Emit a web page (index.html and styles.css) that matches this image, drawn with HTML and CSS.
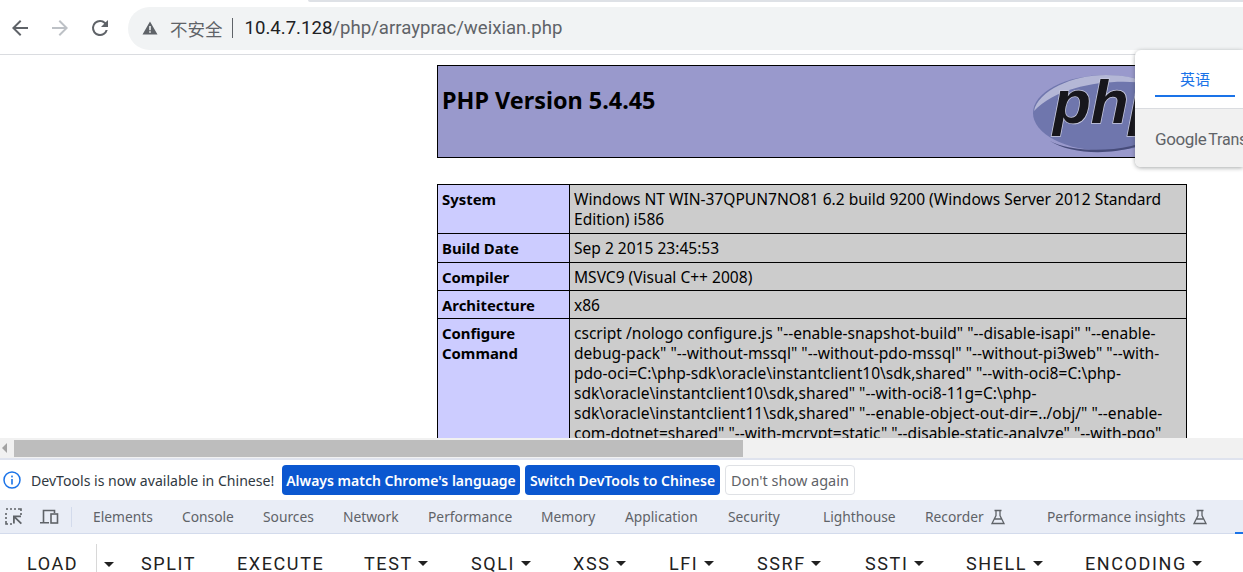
FILE: index.html
```html
<!DOCTYPE html>
<html lang="zh-CN">
<head>
    <meta charset="UTF-8">
    <title>phpinfo()</title>
    <link rel="stylesheet" href="styles.css">
</head>
<body>
    <div class="tabstrip"><div class="tab-corner"></div></div>
    <div class="toolbar">
        <svg class="nav-icon" viewBox="0 0 24 24"><path d="M20 11H7.800l5.600-5.600L12 4l-8 8 8 8 1.400-1.400L7.800 13H20z" fill="#5f6368"/></svg>
        <svg class="nav-icon" viewBox="0 0 24 24"><path d="M4 11h12.200l-5.600-5.600L12 4l8 8-8 8-1.400-1.400 5.600-5.600H4z" fill="#bdc1c6"/></svg>
        <svg class="nav-icon" viewBox="0 0 24 24"><path d="M17.650 6.350A7.960 7.960 0 0 0 12 4a8 8 0 1 0 7.730 10h-2.080A6 6 0 1 1 12 6c1.660 0 3.140.69 4.220 1.780L13 11h7V4z" fill="#5f6368"/></svg>
        <div class="omnibox">
            <svg class="warn-icon" viewBox="0 0 16 16"><path d="M8 1.500 15.500 14.500H.5zM7.200 6v4.200h1.600V6zm0 5.300v1.500h1.600v-1.500z" fill="#5f6368" fill-rule="evenodd"/></svg>
            <span class="not-secure">不安全</span>
            <span class="omni-sep"></span>
            <span class="url"><b>10.4.7.128</b>/php/arrayprac/weixian.php</span>
        </div>
    </div>

    <div class="viewport">
        <div class="page">
            <table class="php-head">
                <tr>
                    <td>
                        <svg class="php-logo" viewBox="0 0 150 80">
                            <ellipse cx="74" cy="40" rx="73" ry="38" fill="#6f76ad"/>
                            <path d="M2 38C6 18 40 2 74 2c18 0 32 3 44 9C86 5 28 10 2 38z" fill="#b4b7d6"/>
                            <path d="M18 68c22 12 80 14 112-8-28 24-88 24-112 8z" fill="#474c7a"/>
                            <text class="php-logo-text" x="21" y="50">php</text>
                        </svg>
                        <h1>PHP Version 5.4.45</h1>
                    </td>
                </tr>
            </table>
            <table class="php-info">
                <tr class="tall"><td class="key">System</td><td class="val">Windows NT WIN-37QPUN7NO81 6.2 build 9200 (Windows Server 2012 Standard Edition) i586</td></tr>
                <tr class="tall"><td class="key">Build Date</td><td class="val">Sep 2 2015 23:45:53</td></tr>
                <tr><td class="key">Compiler</td><td class="val">MSVC9 (Visual C++ 2008)</td></tr>
                <tr><td class="key">Architecture</td><td class="val">x86</td></tr>
                <tr><td class="key">Configure Command</td><td class="val">cscript /nologo configure.js "--enable-snapshot-build" "--disable-isapi" "--enable-debug-pack" "--without-mssql" "--without-pdo-mssql" "--without-pi3web" "--with-pdo-oci=C:\php-sdk\oracle\instantclient10\sdk,shared" "--with-oci8=C:\php-sdk\oracle\instantclient10\sdk,shared" "--with-oci8-11g=C:\php-sdk\oracle\instantclient11\sdk,shared" "--enable-object-out-dir=../obj/" "--enable-com-dotnet=shared" "--with-mcrypt=static" "--disable-static-analyze" "--with-pgo"</td></tr>
            </table>
        </div>
    </div>

    <div class="translate-popup">
        <div class="translate-tabs"><span class="translate-tab">英语</span></div>
        <div class="translate-foot"><span class="google-word">Google</span> <span class="trans-word">Trans</span></div>
    </div>

    <div class="hscroll">
        <span class="hscroll-arrow"></span>
        <div class="hscroll-thumb"></div>
    </div>

    <div class="infobar">
        <svg class="info-icon" viewBox="0 0 18 18"><circle cx="9" cy="9" r="8" fill="none" stroke="#1a73e8" stroke-width="1.500"/><rect x="8.200" y="8" width="1.600" height="5.500" fill="#1a73e8"/><rect x="8.200" y="4.600" width="1.600" height="1.800" fill="#1a73e8"/></svg>
        <span class="info-text">DevTools is now available in Chinese!</span>
        <button class="btn primary match">Always match Chrome's language</button>
        <button class="btn primary switch">Switch DevTools to Chinese</button>
        <button class="btn plain">Don't show again</button>
    </div>

    <div class="dev-tabs">
        <svg class="dev-icon" viewBox="0 0 20 20"><path d="M2 2h2M6 2h2M10 2h2M14 2h3v2M2 6v2M2 10v2M2 14v3h2M6 17h2M17 6v2" fill="none" stroke="#5f6368" stroke-width="1.600"/><path d="M9 8.500h8v1.800h-5L18 16l-1.300 1.300-5.900-5.800v5H9z" fill="#5f6368"/></svg>
        <svg class="dev-icon second" viewBox="0 0 20 20"><path d="M4.500 15V3.500H15.500V6M1 15.800h9" fill="none" stroke="#5f6368" stroke-width="1.600"/><rect x="12" y="7" width="6.500" height="9" fill="none" stroke="#5f6368" stroke-width="1.600"/></svg>
        <span class="dev-sep"></span>
        <span class="dev-tab t-elements">Elements</span>
        <span class="dev-tab t-console">Console</span>
        <span class="dev-tab t-sources">Sources</span>
        <span class="dev-tab t-network">Network</span>
        <span class="dev-tab t-perf">Performance</span>
        <span class="dev-tab t-memory">Memory</span>
        <span class="dev-tab t-app">Application</span>
        <span class="dev-tab t-security">Security</span>
        <span class="dev-tab t-light">Lighthouse</span>
        <span class="dev-tab t-rec">Recorder
            <svg class="flask" viewBox="0 0 16 16"><path d="M4.500 1.500h7M6 1.500v5L2 14.500h12L10 6.500v-5M4.500 10h7" fill="none" stroke="#5f6368" stroke-width="1.300"/></svg>
        </span>
        <span class="dev-tab t-insights">Performance insights
            <svg class="flask" viewBox="0 0 16 16"><path d="M4.500 1.500h7M6 1.500v5L2 14.500h12L10 6.500v-5M4.500 10h7" fill="none" stroke="#5f6368" stroke-width="1.300"/></svg>
        </span>
        <span class="dev-active"></span>
    </div>

    <div class="hackbar">
        <span class="hb-item hb-load">LOAD</span>
        <span class="hb-caret-split"><i class="caret"></i></span>
        <span class="hb-item hb-split">SPLIT</span>
        <span class="hb-item hb-exec">EXECUTE</span>
        <span class="hb-item hb-test">TEST<i class="caret"></i></span>
        <span class="hb-item hb-sqli">SQLI<i class="caret"></i></span>
        <span class="hb-item hb-xss">XSS<i class="caret"></i></span>
        <span class="hb-item hb-lfi">LFI<i class="caret"></i></span>
        <span class="hb-item hb-ssrf">SSRF<i class="caret"></i></span>
        <span class="hb-item hb-ssti">SSTI<i class="caret"></i></span>
        <span class="hb-item hb-shell">SHELL<i class="caret"></i></span>
        <span class="hb-item hb-enc">ENCODING<i class="caret"></i></span>
    </div>
</body>
</html>
```

FILE: styles.css
```css
html, body {
    margin: 0;
    height: 100%;
    overflow: hidden;
}

body {
    width: 1243px;
    height: 572px;
    display: flex;
    flex-direction: column;
    position: relative;
    background: #fff;
    font-family: "Noto Sans", "Noto Sans CJK SC", sans-serif;
}

/* browser chrome */
.tabstrip {
    height: 2px;
    flex: none;
    background: #fff;
}

.tab-corner {
    margin-left: 308px;
    height: 2px;
    background: #dee1e6;
    border-bottom-left-radius: 4px;
}

.toolbar {
    height: 53px;
    flex: none;
    display: flex;
    align-items: center;
    padding-left: 8px;
    box-sizing: border-box;
    border-bottom: 1px solid #dadce0;
}

.nav-icon {
    width: 24px;
    height: 24px;
    margin-right: 16px;
    flex: none;
}

.omnibox {
    flex: 1;
    height: 43px;
    background: #f1f3f4;
    border-radius: 22px 0 0 22px;
    display: flex;
    align-items: center;
    padding-left: 14px;
    color: #5f6368;
}

.warn-icon {
    width: 16px;
    height: 16px;
    margin-right: 12px;
}

.not-secure {
    font-size: 17.500px;
}

.omni-sep {
    width: 1px;
    height: 20px;
    background: #5f6368;
    margin: 0 12px 0 9px;
}

.url {
    font-family: "Roboto", sans-serif;
    font-size: 18.600px;
}

.url b {
    font-weight: 400;
    color: #202124;
}

/* php page */
.viewport {
    height: 383px;
    flex: none;
    overflow: hidden;
}

.page {
    width: 750px;
    margin: 10px 0 0 437px;
    color: #000;
}

table {
    width: 750px;
    border-collapse: collapse;
}

td {
    border: 1px solid #000;
    line-height: 20px;
    padding: 4px 4px 3px;
    vertical-align: top;
}

.tall td {
    padding-bottom: 4px;
}

.php-head {
    height: 93px;
    margin-bottom: 26px;
}

.php-head td {
    background: #9999cc;
    padding: 0 4px;
}

.php-head h1 {
    margin: 19px 0 0;
    font-size: 23.400px;
    line-height: 30px;
    font-weight: 700;
}

.php-logo {
    float: right;
    width: 150px;
    height: 80px;
    margin: 7px 0 0 0;
}

.php-logo-text {
    font-family: "Liberation Sans", sans-serif;
    font-size: 62px;
    font-weight: 700;
    font-style: italic;
    fill: #17161c;
    stroke: #c9cbe0;
    stroke-width: 1.500px;
    paint-order: stroke;
}

.key {
    width: 123px;
    background: #ccccff;
    font-size: 14.900px;
    font-weight: 700;
}

.val {
    background: #cccccc;
    font-size: 15.550px;
}

/* translate bubble */
.translate-popup {
    position: absolute;
    top: 50px;
    left: 1135px;
    width: 108px;
    height: 117px;
    background: #fff;
    border-radius: 6px 0 0 6px;
    box-shadow: 0 1px 4px rgba(60, 64, 67, 0.45);
    overflow: hidden;
}

.translate-tabs {
    height: 59px;
    box-sizing: border-box;
    padding: 16px 0 0 20px;
    border-bottom: 1px solid #dadce0;
    font-size: 15px;
}

.translate-tab {
    display: block;
    width: 80px;
    height: 31px;
    line-height: 26px;
    text-align: center;
    color: #1a73e8;
    border-bottom: 2px solid #1a73e8;
    box-sizing: border-box;
    margin-top: 0;
}

.translate-foot {
    height: 58px;
    background: #f1f1f1;
    padding: 20px 0 0 20px;
    box-sizing: border-box;
    white-space: nowrap;
    color: #5f6368;
    font-size: 16px;
    font-family: "Roboto", sans-serif;
}

.google-word {
    font-size: 17px;
    letter-spacing: -0.400px;
    margin-right: -2px;
}

.trans-word {
    letter-spacing: -0.200px;
}

/* horizontal scrollbar */
.hscroll {
    height: 22px;
    flex: none;
    background: #f1f1f1;
    display: flex;
    align-items: center;
    box-sizing: border-box;
    border-bottom: 2px solid #dfe3ee;
}

.hscroll-arrow {
    width: 0;
    height: 0;
    border-style: solid;
    border-width: 5px 5px 5px 0;
    border-color: transparent #a3a3a3 transparent transparent;
    margin: 0 7px 0 2px;
}

.hscroll-thumb {
    width: 729px;
    height: 17px;
    background: #bdbdbd;
}

/* devtools language bar */
.infobar {
    height: 40px;
    flex: none;
    display: flex;
    align-items: center;
    box-sizing: border-box;
    padding-left: 3px;
    font-size: 14.100px;
    color: #303942;
}

.info-icon {
    width: 18px;
    height: 18px;
    margin-right: 10px;
}

.info-text {
    width: 251px;
    white-space: nowrap;
}

.btn {
    height: 30px;
    border-radius: 4px;
    font-family: "Noto Sans", sans-serif;
    font-size: 14px;
    padding: 0;
    margin-right: 5px;
    white-space: nowrap;
}

.btn.primary {
    background: #0b57d0;
    color: #fff;
    font-weight: 600;
    border: 0;
}

.btn.match { width: 238px; }
.btn.switch { width: 195px; }

.btn.plain {
    width: 130px;
    background: #fff;
    color: #5f6368;
    border: 1px solid #dfe1e5;
    font-size: 14.500px;
}

/* devtools tabs */
.dev-tabs {
    height: 34px;
    flex: none;
    display: flex;
    align-items: center;
    position: relative;
    background: #e9edf6;
    border-bottom: 1px solid #d3dbec;
    box-sizing: border-box;
    font-size: 13.800px;
    color: #5f6368;
    padding-left: 4px;
}

.dev-icon {
    width: 20px;
    height: 20px;
    flex: none;
}

.dev-icon.second {
    margin-left: 15px;
}

.dev-sep {
    width: 1px;
    height: 20px;
    background: #d3dbec;
    margin: 0 21px 0 12px;
}

.dev-tab {
    white-space: nowrap;
    display: flex;
    align-items: center;
    gap: 6px;
}

.t-elements { width: 89px; }
.t-console { width: 81px; }
.t-sources { width: 80px; }
.t-network { width: 85px; }
.t-perf { width: 113px; }
.t-memory { width: 84px; }
.t-app { width: 103px; }
.t-security { width: 95px; }
.t-light { width: 102px; }
.t-rec { width: 122px; }

.flask {
    width: 16px;
    height: 16px;
}

.dev-active {
    position: absolute;
    right: 0;
    bottom: -1px;
    width: 8px;
    height: 2px;
    background: #1a73e8;
}

/* hackbar */
.hackbar {
    flex: 1;
    display: flex;
    align-items: flex-start;
    padding: 10px 0 0 27px;
    overflow: hidden;
    font-family: "Roboto", sans-serif;
    font-size: 18px;
    letter-spacing: 1.600px;
    color: #212121;
}

.hb-item {
    white-space: nowrap;
    display: flex;
    align-items: center;
    height: 30px;
    padding-top: 9px;
    box-sizing: border-box;
}

.hb-load { width: 69px; }
.hb-split { width: 96px; }
.hb-exec { width: 127px; }
.hb-test { width: 107px; }
.hb-sqli { width: 102px; }
.hb-xss { width: 96px; }
.hb-lfi { width: 88px; }
.hb-ssrf { width: 108px; }
.hb-ssti { width: 101px; }
.hb-shell { width: 119px; }

.hb-caret-split {
    width: 45px;
    height: 38px;
    border-left: 1px solid #d8d8d8;
    box-sizing: border-box;
    padding: 18px 0 0 7px;
    display: block;
}

.caret {
    display: inline-block;
    width: 0;
    height: 0;
    border-style: solid;
    border-width: 5px 5px 0;
    border-color: #212121 transparent transparent;
    margin-left: 5.500px;
}

.hb-caret-split .caret {
    margin-left: 0;
    vertical-align: top;
}
```
